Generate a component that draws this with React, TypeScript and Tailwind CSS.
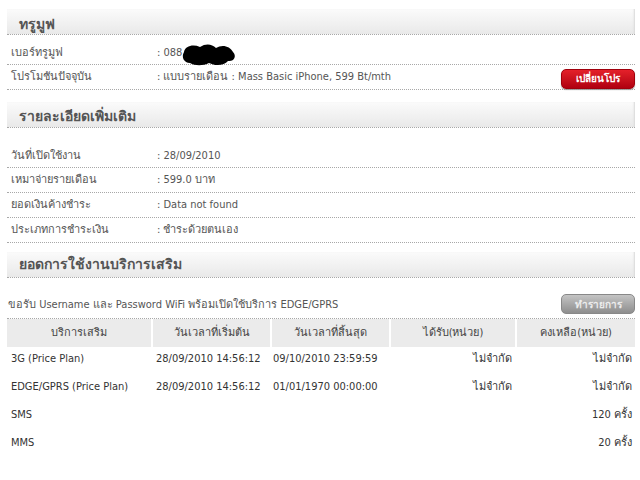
import React from "react";

const font = { fontFamily: '"DejaVu Sans Condensed", "DejaVu Sans", "Noto Sans", Tahoma, sans-serif' };

function SectionHeader({ title, pt = "" }: { title: string; pt?: string }) {
  return (
    <div className={`h-[26px] flex items-center pl-[12px] ${pt} bg-gradient-to-b from-[#fbfbfb] to-[#e9e9e9] border-b border-dotted border-[#a8a8a8] shadow-[inset_-2px_0_2px_-1px_#d8d8d8]`}>
      <span className="text-[14px] font-bold text-[#555]">{title}</span>
    </div>
  );
}

function Row({ label, value, extra, h = "h-[25px]", pad = "" }: { label: string; value: React.ReactNode; extra?: React.ReactNode; h?: string; pad?: string }) {
  return (
    <div className={`${h} ${pad} flex items-center border-b border-dotted border-[#a8a8a8] text-[11px] text-[#555]`}>
      <div className="w-[150px] pl-[4px] shrink-0">{label}</div>
      <div className="flex-1 flex items-center">{value}</div>
      {extra}
    </div>
  );
}

function Blob() {
  return (
    <svg width="56" height="24" viewBox="0 0 56 24" className="-ml-[1px] mt-[2px]">
      <path
        d="M3 9 C4 3 12 1 19 4 C25 0 31 1 35 5 C41 1 49 3 52 9 C56 13 53 19 47 18 C43 23 34 23 28 20 C22 23 14 23 9 20 C3 20 0 14 3 9 Z"
        fill="#000"
      />
    </svg>
  );
}

export default function App() {
  const th = "h-[28px] bg-[#ebebeb] text-[11px] text-[#444] font-normal text-center";
  return (
    <div className="bg-white w-[640px] h-[480px] overflow-hidden pl-[7px] pr-[5px] pt-[9px]" style={font}>
      <SectionHeader title="ทรูมูฟ" pt="pt-[5px]" />
      <Row h="h-[30px]" pad="pt-[8px]" label="เบอร์ทรูมูฟ" value={<><span>: 088</span><Blob /></>} />
      <Row
        label="โปรโมชันปัจจุบัน"
        value={<span>: แบบรายเดือน : Mass Basic iPhone, 599 Bt/mth</span>}
        extra={
          <div className="w-[74px] h-[20px] mt-[3px] rounded-[5px] bg-gradient-to-b from-[#e4202a] to-[#b00010] border border-[#a0000c] flex items-center justify-center text-white text-[10px] font-bold shadow-[0_1px_1px_#999]">
            เปลี่ยนโปร
          </div>
        }
      />
      <div className="h-[12px]" />
      <SectionHeader title="รายละเอียดเพิ่มเติม" pt="pt-[3px]" />
      <div className="h-[15px]" />
      <Row label="วันที่เปิดใช้งาน" value=": 28/09/2010" pad="pt-[3px]" />
      <Row label="เหมาจ่ายรายเดือน" value=": 599.0 บาท" pad="pt-[1px]" />
      <Row label="ยอดเงินค้างชำระ" value=": Data not found" pad="pt-[1px]" />
      <Row label="ประเภทการชำระเงิน" value=": ชำระด้วยตนเอง" />
      <div className="h-[9px]" />
      <SectionHeader title="ยอดการใช้งานบริการเสริม" />
      <div className="h-[15px]" />
      <div className="h-[26px] flex items-center border-b border-dotted border-[#a8a8a8] text-[11px] text-[#555]">
        <div className="flex-1 pl-[1px]">ขอรับ Username และ Password WiFi พร้อมเปิดใช้บริการ EDGE/GPRS</div>
        <div className="w-[74px] h-[20px] rounded-[5px] bg-gradient-to-b from-[#c4c4c4] to-[#8e8e8e] border border-[#888] flex items-center justify-center text-[#ececec] text-[10px] font-bold mb-[3px]">
          ทำรายการ
        </div>
      </div>
      <table className="w-full border-collapse text-[11px] text-[#333]">
        <colgroup>
          <col className="w-[145px]" />
          <col className="w-[119px]" />
          <col className="w-[119px]" />
          <col className="w-[126px]" />
          <col />
        </colgroup>
        <thead>
          <tr>
            <th className={`${th} border-r-2 border-white`}>บริการเสริม</th>
            <th className={`${th} border-r-2 border-white`}>วันเวลาที่เริ่มต้น</th>
            <th className={`${th} border-r-2 border-white`}>วันเวลาที่สิ้นสุด</th>
            <th className={`${th} border-r-2 border-white`}>ได้รับ(หน่วย)</th>
            <th className={th}>คงเหลือ(หน่วย)</th>
          </tr>
        </thead>
        <tbody>
          {[
            ["3G (Price Plan)", "28/09/2010 14:56:12", "09/10/2010 23:59:59", "ไม่จำกัด", "ไม่จำกัด"],
            ["EDGE/GPRS (Price Plan)", "28/09/2010 14:56:12", "01/01/1970 00:00:00", "ไม่จำกัด", "ไม่จำกัด"],
            ["SMS", "", "", "", "120 ครั้ง"],
            ["MMS", "", "", "", "20 ครั้ง"],
          ].map((r, i) => (
            <tr key={i} className="h-[28px]">
              <td className="pl-[4px] pb-[3px]">{r[0]}</td>
              <td className="pl-[4px] pb-[3px]">{r[1]}</td>
              <td className="pl-[2px] pb-[3px]">{r[2]}</td>
              <td className="text-right pr-[4px] pb-[3px]">{r[3]}</td>
              <td className="text-right pr-[3px] pb-[3px]">{r[4]}</td>
            </tr>
          ))}
        </tbody>
      </table>
    </div>
  );
}
